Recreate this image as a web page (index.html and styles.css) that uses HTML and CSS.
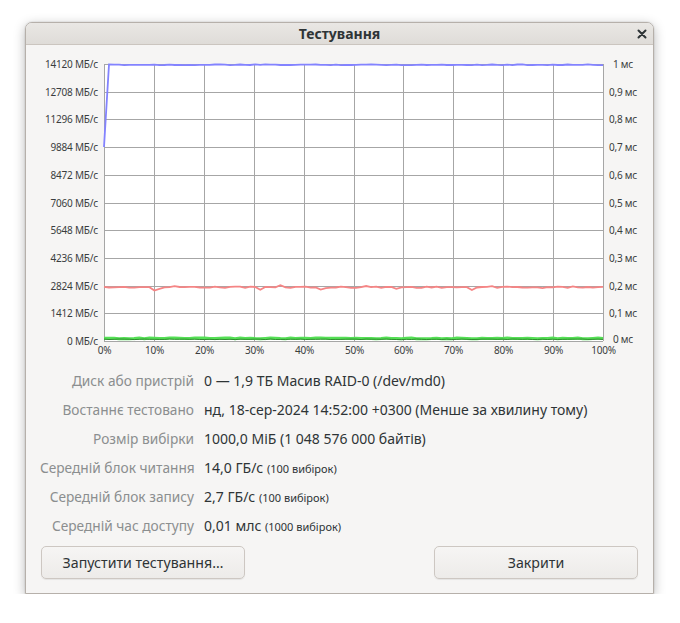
FILE: index.html
```html
<!DOCTYPE html>
<html lang="uk">
<head>
  <meta charset="UTF-8">
  <title>Тестування</title>
  <link rel="stylesheet" href="styles.css">
</head>
<body>
  <div class="window">
    <div class="titlebar">
      <span class="title">Тестування</span>
      <span class="close">
        <svg width="10" height="10" viewBox="0 0 10 10"><path d="M1.5 1.5 L8.5 8.5 M8.5 1.5 L1.5 8.5" stroke="#2e3436" stroke-width="2" stroke-linecap="round"/></svg>
      </span>
    </div>

    <div class="content">
      <!-- Графік -->
      <svg class="chart" width="629" height="320" viewBox="25 44 629 320">
        <rect x="103" y="63" width="499" height="277" fill="#ffffff"/>
        <g id="grid" stroke="#a6a6a6" stroke-width="1"></g>
        <g class="axis-left" id="axisLeft"></g>
        <g class="axis-right" id="axisRight"></g>
        <g class="axis-bottom" id="axisBottom"></g>
        <polyline id="greenBand" fill="none" stroke="#55e055" stroke-width="3"/>
        <polyline id="greenLine" fill="none" stroke="#2f8a2f" stroke-width="1"/>
        <polyline id="redLine" fill="none" stroke="#f58585" stroke-width="1.8"/>
        <polyline id="blueLine" fill="none" stroke="#8383ff" stroke-width="1.8"/>
      </svg>

      <!-- Дані -->
      <div class="info">
        <div class="label">Диск або пристрій</div>
        <div class="value">0 — 1,9 ТБ Масив RAID-0 (/dev/md0)</div>

        <div class="label">Востаннє тестовано</div>
        <div class="value">нд, 18-сер-2024 14:52:00 +0300 (Менше за хвилину тому)</div>

        <div class="label">Розмір вибірки</div>
        <div class="value">1000,0 МіБ (1 048 576 000 байтів)</div>

        <div class="label">Середній блок читання</div>
        <div class="value">14,0 ГБ/с <small>(100 вибірок)</small></div>

        <div class="label">Середній блок запису</div>
        <div class="value">2,7 ГБ/с <small>(100 вибірок)</small></div>

        <div class="label">Середній час доступу</div>
        <div class="value">0,01 млс <small>(1000 вибірок)</small></div>
      </div>

      <div class="actions">
        <button>Запустити тестування…</button>
        <button>Закрити</button>
      </div>
    </div>
  </div>

  <script>
    const NS = 'http://www.w3.org/2000/svg';
    const plotLeft = 103, plotRight = 602, plotTop = 63, plotBottom = 340;
    const rowH = (plotBottom - plotTop) / 10;
    const colW = (plotRight - plotLeft) / 10;

    const grid = document.getElementById('grid');
    const axisLeft = document.getElementById('axisLeft');
    const axisRight = document.getElementById('axisRight');
    const axisBottom = document.getElementById('axisBottom');

    function el(name, attrs, text) {
      const e = document.createElementNS(NS, name);
      for (const k in attrs) e.setAttribute(k, attrs[k]);
      if (text !== undefined) e.textContent = text;
      return e;
    }

    const mbLabels = ['14120', '12708', '11296', '9884', '8472', '7060', '5648', '4236', '2824', '1412', '0'];
    const msLabels = ['1', '0,9', '0,8', '0,7', '0,6', '0,5', '0,4', '0,3', '0,2', '0,1', '0'];

    for (let i = 0; i <= 10; i++) {
      const y = Math.round(plotTop + i * rowH) + 0.5;
      const x = Math.round(plotLeft + i * colW) + 0.5;
      grid.appendChild(el('line', { x1: plotLeft, y1: y, x2: plotRight, y2: y }));
      grid.appendChild(el('line', { x1: x, y1: plotTop, x2: x, y2: plotBottom }));
      axisLeft.appendChild(el('text', { x: 97, y: y + 3.5, 'text-anchor': 'end' }, mbLabels[i] + ' МБ/с'));
      const ry = i === 10 ? y + 1 : y + 3.5;
      axisRight.appendChild(el('text', { x: 622, y: ry, 'text-anchor': 'middle' }, msLabels[i] + ' мс'));
      axisBottom.appendChild(el('text', { x: x, y: 352.5, 'text-anchor': 'middle' }, (i * 10) + '%'));
    }

    function noise(i, seed) {
      const v = Math.sin(i * 12.9898 + seed * 78.233) * 43758.5453;
      return v - Math.floor(v) - 0.5;
    }

    const n = 100;
    const step = (plotRight - plotLeft) / (n - 1);
    const dips = { 10: 4, 11: 1.5, 31: 2.5, 43: 3, 44: 1, 73: 3.5, 58: 1.5, 87: 1.5 };
    const bumps = { 14: -1.5, 18: -1, 26: -1, 35: -1.5, 40: -1, 52: -1, 77: -1.5, 93: -1 };
    let red = [], blue = [], green = [], greenDark = [];
    for (let i = 0; i < n; i++) {
      const x = (plotLeft + i * step).toFixed(1);
      let ry = 286.2 + noise(i, 1) * 1.4 + (dips[i] || 0) + (bumps[i] || 0);
      red.push(x + ',' + ry.toFixed(1));
      let by = i === 0 ? 146 : 63.8 + noise(i, 2) * 0.8;
      blue.push(x + ',' + by.toFixed(1));
      green.push(x + ',' + (337.4 + noise(i, 3) * 0.8).toFixed(1));
      greenDark.push(x + ',' + (338.3 + noise(i, 4) * 0.6).toFixed(1));
    }
    document.getElementById('redLine').setAttribute('points', red.join(' '));
    document.getElementById('blueLine').setAttribute('points', blue.join(' '));
    document.getElementById('greenBand').setAttribute('points', green.join(' '));
    document.getElementById('greenLine').setAttribute('points', greenDark.join(' '));
  </script>
</body>
</html>
```

FILE: styles.css
```css
html, body {
  margin: 0;
  background: #ffffff;
}
body {
  padding: 22px 0 0 25px;
  font-family: 'Noto Sans', sans-serif;
  color: #2e3436;
}
.window {
  box-sizing: border-box;
  width: 629px;
  height: 572px;
  background: #f6f5f4;
  border: 1px solid #b6b0aa;
  border-radius: 7px 7px 0 0;
  box-shadow: 0 3px 12px rgba(0,0,0,0.28), 0 0 0 1px rgba(0,0,0,0.04);
  overflow: hidden;
}
.titlebar {
  position: relative;
  height: 21px;
  background: linear-gradient(#e9e7e4, #dfdcd8);
  border-bottom: 1px solid #cbc5bf;
  text-align: center;
  line-height: 21px;
}
.title {
  font-size: 14px;
  font-weight: 700;
  color: #2e3436;
}
.close {
  position: absolute;
  right: 6px;
  top: 6px;
  width: 10px;
  height: 10px;
  line-height: 0;
}
.content {
  padding: 0 14px 14px 14px;
}
.chart {
  display: block;
  margin: 0 -14px;
}
.chart text {
  font-family: 'Noto Sans', sans-serif;
  font-size: 10px;
  fill: #3a3d3e;
  letter-spacing: -0.2px;
}
.info {
  display: grid;
  grid-template-columns: 154px auto;
  column-gap: 10px;
  grid-auto-rows: 29px;
  align-items: center;
  margin-top: 1px;
}
.label {
  text-align: right;
  color: #8b8e8f;
  white-space: nowrap;
  font-size: 13.7px;
}
.value {
  white-space: nowrap;
  font-size: 14px;
}
.value small {
  font-size: 11px;
}
.actions {
  display: flex;
  justify-content: space-between;
  margin-top: 6px;
  padding: 0 1px;
}
.actions button {
  box-sizing: border-box;
  width: 204px;
  height: 33px;
  font-family: 'Noto Sans', sans-serif;
  font-size: 14.2px;
  color: #2e3436;
  background: linear-gradient(#f6f5f4, #edebe9);
  border: 1px solid #cdc7c2;
  border-radius: 5px;
  box-shadow: 0 1px 1px rgba(0,0,0,0.07);
}
```
